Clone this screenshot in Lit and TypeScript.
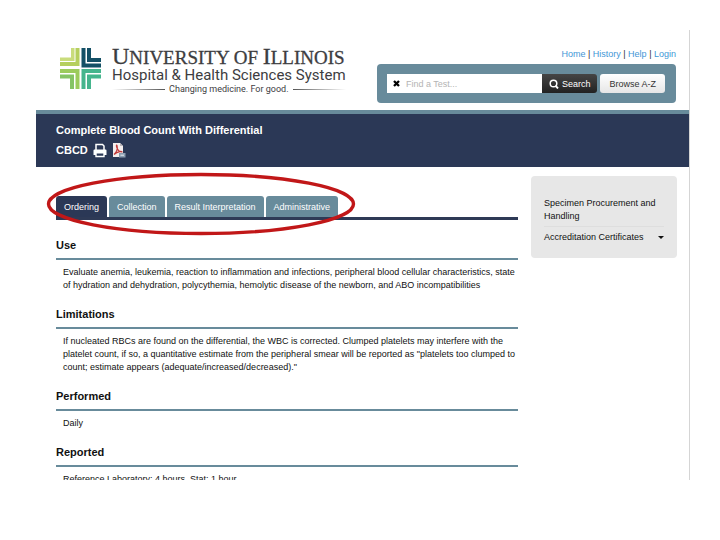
import { LitElement, html, css } from "lit";
import { customElement, property, state } from "lit/decorators.js";
import { classMap } from "lit/directives/class-map.js";

const TABS = ["Ordering", "Collection", "Result Interpretation", "Administrative"];

const SECTIONS = [
  {
    title: "Use",
    lines: [
      "Evaluate anemia, leukemia, reaction to inflammation and infections, peripheral blood cellular characteristics, state",
      "of hydration and dehydration, polycythemia, hemolytic disease of the newborn, and ABO incompatibilities",
    ],
  },
  {
    title: "Limitations",
    lines: [
      "If nucleated RBCs are found on the differential, the WBC is corrected. Clumped platelets may interfere with the",
      "platelet count, if so, a quantitative estimate from the peripheral smear will be reported as \"platelets too clumped to",
      "count; estimate appears (adequate/increased/decreased).\"",
    ],
  },
  { title: "Performed", lines: ["Daily"] },
  { title: "Reported", lines: ["Reference Laboratory: 4 hours, Stat: 1 hour"] },
];

@customElement("site-brand")
class SiteBrand extends LitElement {
  static styles = css`
    :host { display: flex; gap: 11px; color: #3d3d3f; }
    .mark { width: 41px; height: 41px; margin-top: 2px; flex: none; }
    .words { display: flex; flex-direction: column; white-space: nowrap; }
    .name { font: 19px/21px "Liberation Serif", serif; height: 21px; -webkit-text-stroke: 0.3px #3d3d3f; }
    .cap { font-size: 24px; line-height: 21px; }
    .sub { font: 15px/17px Roboto, sans-serif; }
    .tag { display: flex; align-items: center; gap: 4px; font: 9px/11px Roboto, sans-serif; }
    .rule { flex: 1; height: 1px; background: linear-gradient(to right, #fff, #555); }
    .rule.end { background: linear-gradient(to left, #fff, #555); }
  `;
  render() {
    return html`
      <svg class="mark" viewBox="0 0 41 41" aria-hidden="true">
        <path fill="#c9dc7c" d="M11 0H14.500V13H0V9.500H11Z" />
        <path fill="#b5cf5e" d="M15.500 0H19.500V18H0V14H15.500Z" />
        <path fill="#145066" d="M21.500 0H25.500V15.500H41V19.500H21.500Z" />
        <path fill="#145066" d="M27 0H31V10H41V14H27Z" />
        <path fill="#9ccb5c" d="M0 21H19.500V41H15.500V25H0Z" />
        <path fill="#86c465" d="M0 26.500H14V41H10V30.500H0Z" />
        <path fill="#45b58d" d="M21.500 21H41V25H25.500V41H21.500Z" />
        <path fill="#45b58d" d="M27 26.500H41V30.500H31V41H27Z" />
      </svg>
      <div class="words">
        <div class="name"><span class="cap">U</span>NIVERSITY OF <span class="cap">I</span>LLINOIS</div>
        <div class="sub">Hospital &amp; Health Sciences System</div>
        <div class="tag"><span class="rule"></span>Changing medicine. For good.<span class="rule end"></span></div>
      </div>
    `;
  }
}

@customElement("test-search")
class TestSearch extends LitElement {
  static styles = css`
    :host { display: block; font: 9px/12px "Liberation Sans", Arial, sans-serif; }
    nav { text-align: right; color: #333; margin-bottom: 4px; }
    a { color: #3f97d6; text-decoration: none; }
    form { display: flex; background: #688b9b; border-radius: 4px; padding: 10px 11px 10px 10px; height: 19px; }
    .field { flex: 1; min-width: 0; display: flex; align-items: center; background: #fff; padding-left: 6px; gap: 6px; }
    .field svg { width: 7px; height: 7px; flex: none; }
    input { flex: 1; min-width: 0; border: 0; padding: 0; outline: 0; font: inherit; background: none; }
    input::placeholder { color: #b4b4b4; opacity: 1; }
    button { font: inherit; border: 0; padding: 0 7px; border-radius: 3px; white-space: nowrap; }
    .go { display: flex; align-items: center; gap: 3px; color: #fff; background: linear-gradient(#454545, #222); border-radius: 0 3px 3px 0; }
    .go svg { width: 10px; height: 10px; }
    .browse { margin-left: 3px; padding: 0 9px; color: #333; background: linear-gradient(#fff, #e6e6e6); }
  `;
  render() {
    return html`
      <nav><a href="#home">Home</a> | <a href="#history">History</a> | <a href="#help">Help</a> | <a href="#login">Login</a></nav>
      <form @submit=${(e: Event) => e.preventDefault()}>
        <div class="field">
          <svg viewBox="0 0 7 7" aria-hidden="true"><path d="M1 1L6 6M6 1L1 6" stroke="#000" stroke-width="2.300" /></svg>
          <input type="text" placeholder="Find a Test..." aria-label="Find a Test" />
        </div>
        <button class="go" type="submit">
          <svg viewBox="0 0 10 10" fill="none" stroke="#fff" aria-hidden="true"><circle cx="4.500" cy="4.500" r="3.300" stroke-width="1.500" /><path d="M6.500 6.700L9 9.500" stroke-width="1.900" /></svg>
          Search
        </button>
        <button class="browse" type="button">Browse A-Z</button>
      </form>
    `;
  }
}

@customElement("tab-strip")
class TabStrip extends LitElement {
  @state() private active = 0;
  static styles = css`
    :host { display: block; position: relative; font: 9px/12px "Liberation Sans", Arial, sans-serif; }
    .tabs { display: flex; gap: 2px; border-bottom: 3px solid #2e3a56; }
    button { font: inherit; color: #fff; background: #688b9b; border: 0; border-radius: 3px 3px 0 0; padding: 5px 8px 4px; white-space: nowrap; }
    .active { background: #2b3856; }
    .ring { position: absolute; left: -10px; top: -24px; width: 310px; height: 64px; pointer-events: none; }
  `;
  render() {
    return html`
      <div class="tabs" role="tablist">
        ${TABS.map((name, i) => html`<button role="tab" aria-selected=${i === this.active ? "true" : "false"}
          class=${classMap({ active: i === this.active })} @click=${() => (this.active = i)}>${name}</button>`)}
      </div>
      <svg class="ring" viewBox="0 0 310 64" aria-hidden="true">
        <ellipse cx="155" cy="32" rx="152.500" ry="29.500" fill="none" stroke="#c11718" stroke-width="3.400" />
      </svg>
    `;
  }
}

@customElement("info-section")
class InfoSection extends LitElement {
  @property() heading = "";
  @property({ attribute: false }) lines: string[] = [];
  static styles = css`
    :host { display: block; font-family: "Liberation Sans", Arial, sans-serif; color: #111; }
    h2 { margin: 0; font-size: 11px; line-height: 14px; padding-bottom: 6px; border-bottom: 2px solid #688b9b; }
    p { margin: 0; padding: 6px 0 15px 7px; font-size: 9px; line-height: 13px; white-space: nowrap; }
  `;
  render() {
    return html`<h2>${this.heading}</h2>
      <p>${this.lines.map((l, i) => (i ? html`<br />${l}` : l))}</p>`;
  }
}

@customElement("app-root")
class AppRoot extends LitElement {
  static styles = css`
    :host { display: flex; box-sizing: border-box; height: 100vh; padding: 30px 30px 60px 36px; background: #fff; font: 9px/13px "Liberation Sans", Arial, sans-serif; color: #111; }
    .page { flex: 1; min-width: 0; overflow: hidden; border-right: 1px solid #d5d5d5; }
    header { display: flex; justify-content: space-between; align-items: flex-start; padding: 16px 13px 7px 24px; }
    test-search { width: 299px; padding-top: 2px; }
    .banner { background: #2b3856; border-top: 4px solid #688b9b; color: #fff; padding: 8px 20px; font-weight: bold; }
    h1, .code { margin: 0; font-size: 11px; line-height: 16px; }
    .code { display: flex; align-items: center; gap: 5px; margin-top: 4px; line-height: 17px; }
    .code a { display: flex; }
    .code svg { width: 14px; height: 15px; }
    .body { display: flex; gap: 13px; padding: 9px 12px 0 20px; align-items: flex-start; }
    main { flex: 1; min-width: 0; padding-top: 20px; }
    tab-strip { margin-bottom: 18px; }
    aside { flex: none; box-sizing: border-box; width: 146px; background: #e7e7e7; border-radius: 4px; padding: 21px 13px 11px; }
    aside a { display: block; color: #111; text-decoration: none; }
    .more { display: flex; justify-content: space-between; align-items: center; border-top: 1px solid #dedede; margin-top: 3px; padding: 4px 0 3px; }
    .caret { border: 3px solid transparent; border-top-color: #111; border-bottom: 0; }
  `;
  render() {
    return html`
      <div class="page">
        <header><site-brand></site-brand><test-search></test-search></header>
        <div class="banner">
          <h1>Complete Blood Count With Differential</h1>
          <div class="code">
            CBCD
            <a href="#print" aria-label="Print">
              <svg viewBox="0 0 14 15" aria-hidden="true">
                <path d="M3 7V1.500H9.500L11 3V7" fill="none" stroke="#fff" stroke-width="1.500" />
                <path d="M1.500 6.500H12.500Q13.500 6.500 13.500 7.500V12H11V9.500H3V12H0.500V7.500Q0.500 6.500 1.500 6.500Z" fill="#fff" />
                <path d="M3 9.800H11V13.500H3Z" fill="#2b3856" stroke="#fff" stroke-width="1.400" />
              </svg>
            </a>
            <a href="#pdf" aria-label="PDF">
              <svg viewBox="0 0 14 15" aria-hidden="true">
                <path d="M1 0H8L11 3V14H1Z" fill="#f4eeee" />
                <path d="M8 0V3H11Z" fill="#b9b4b8" />
                <path d="M2 11.500C4.500 9.500 6 5.500 5 2.500C4.500 1.500 4 3 5 5C6 7.500 7.500 9 10 9C10.500 8 6 8 2 11.500Z" fill="none" stroke="#c23a3a" stroke-width="1.200" />
                <path d="M7 10H13.500V14.500H7Z" fill="#8c9db0" /><path d="M8.500 12.200H12" stroke="#e8edf2" stroke-width="1" />
              </svg>
            </a>
          </div>
        </div>
        <div class="body">
          <main>
            <tab-strip></tab-strip>
            ${SECTIONS.map((s) => html`<info-section .heading=${s.title} .lines=${s.lines}></info-section>`)}
          </main>
          <aside>
            <a href="#specimen">Specimen Procurement and Handling</a>
            <a class="more" href="#accreditation">Accreditation Certificates<span class="caret"></span></a>
          </aside>
        </div>
      </div>
    `;
  }
}
